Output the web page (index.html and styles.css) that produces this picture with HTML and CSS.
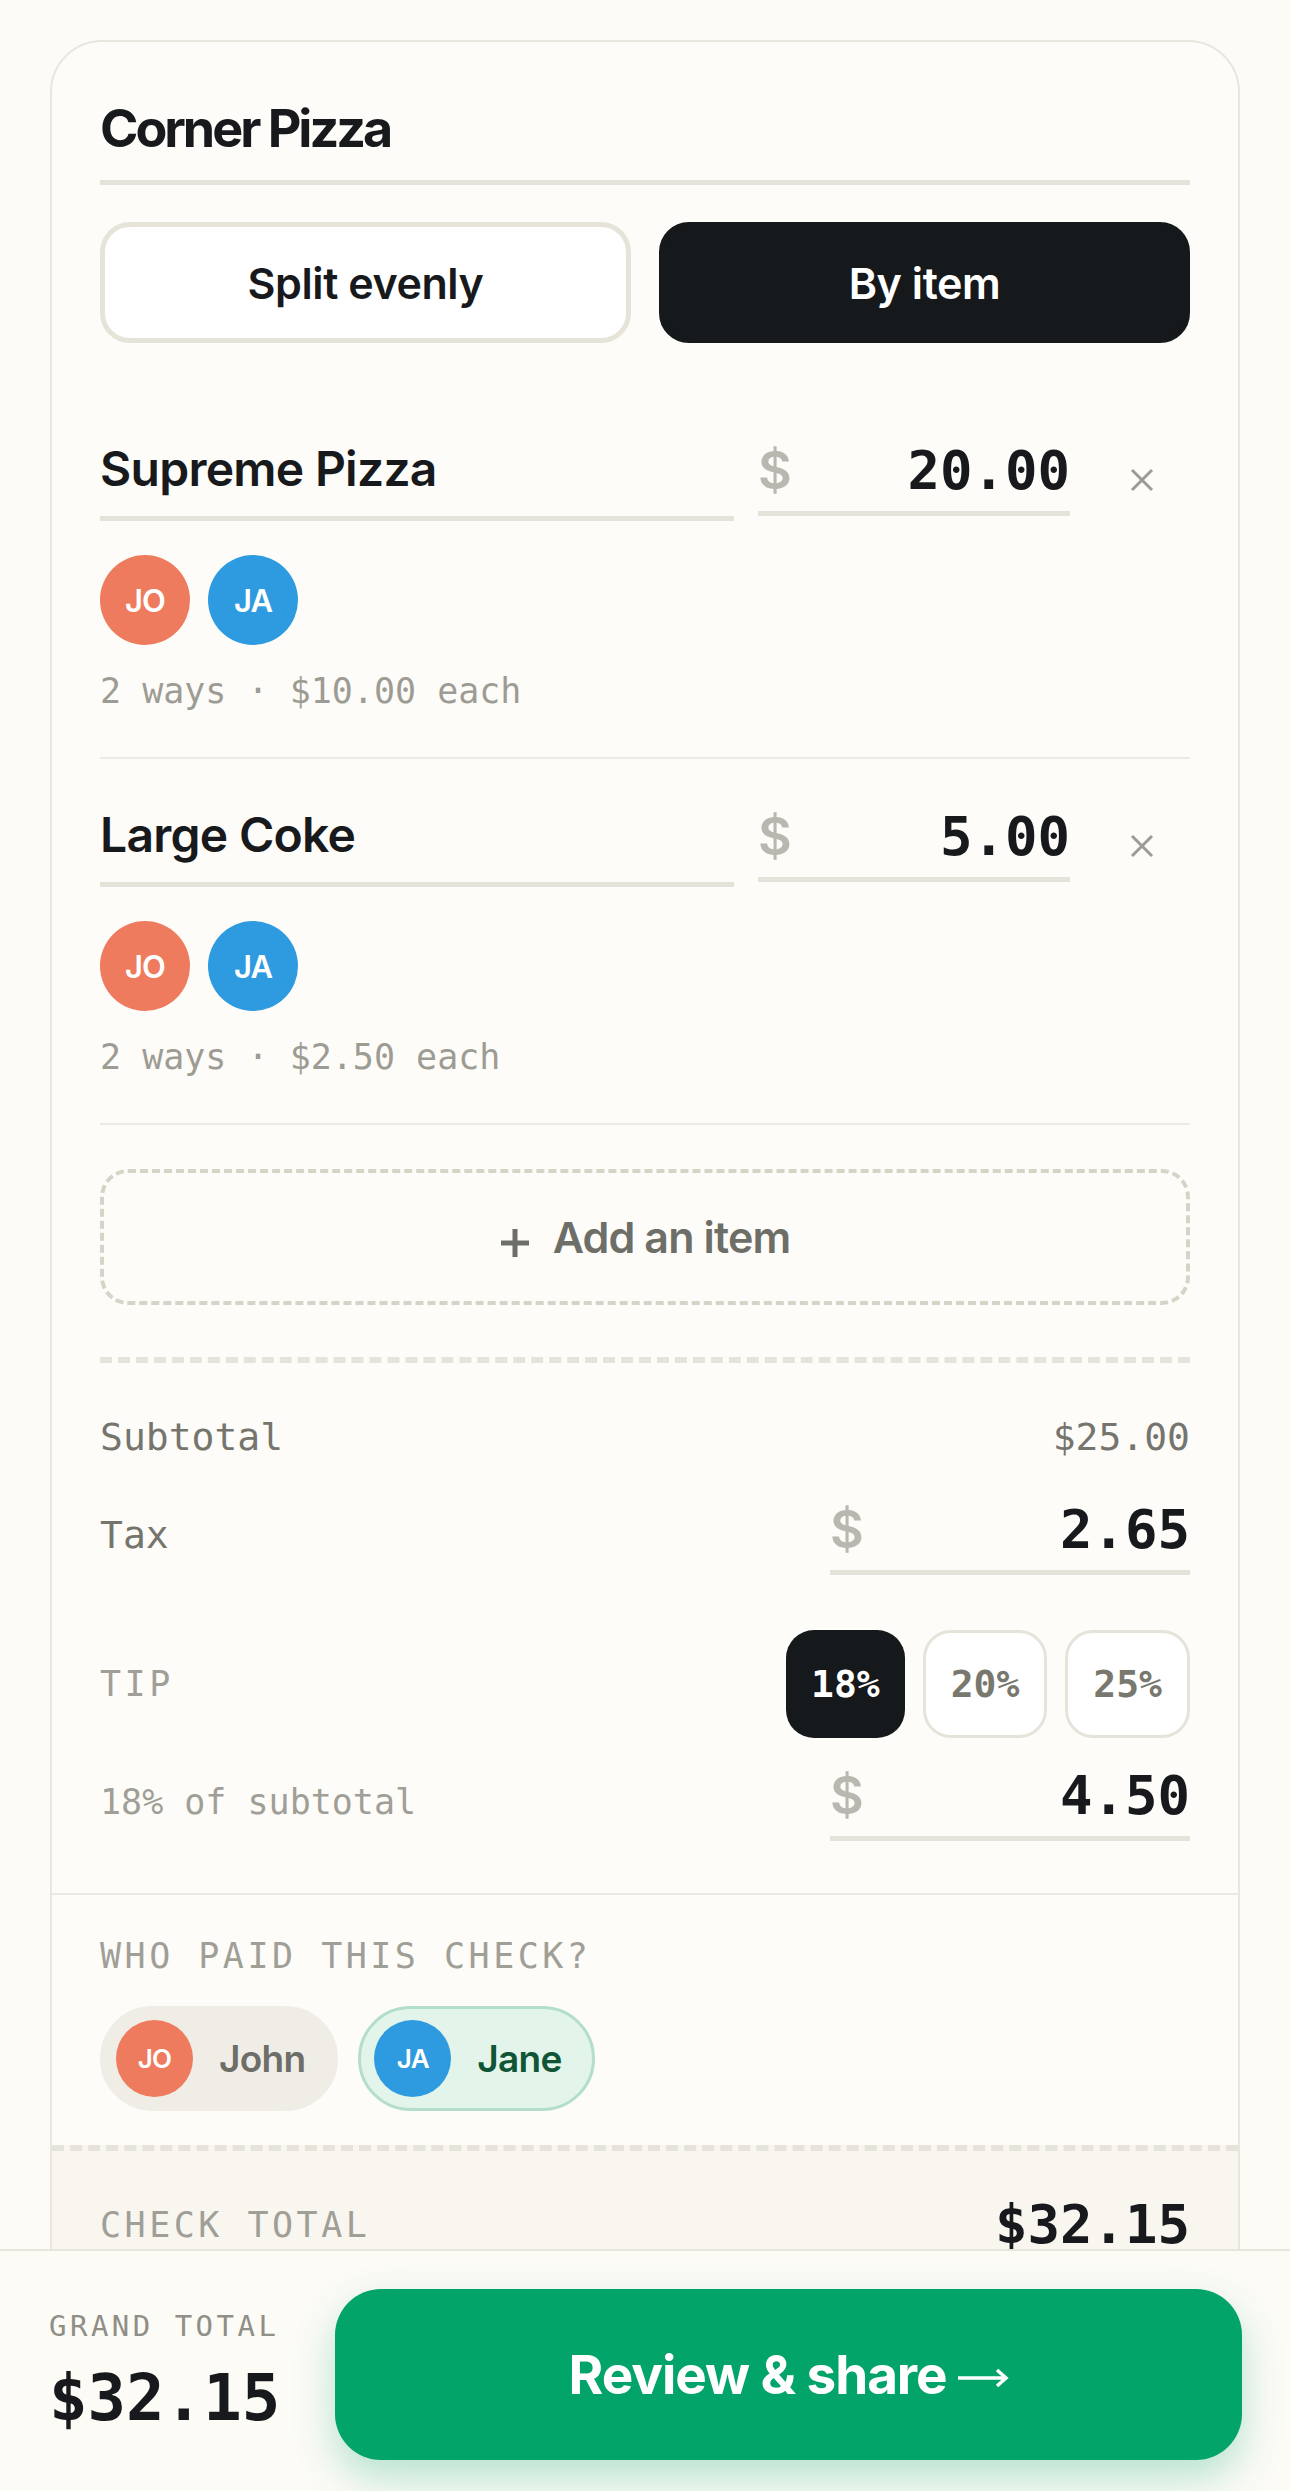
FILE: index.html
```html
<!DOCTYPE html>
<html lang="en">

<head>
    <meta charset="UTF-8">
    <meta name="viewport" content="width=device-width, initial-scale=1.0">
    <title>Corner Pizza</title>
    <link rel="stylesheet" href="styles.css">
</head>

<body>
    <div class="card">
        <div class="card-main">
            <h1 class="check-name">Corner Pizza</h1>

            <div class="split-toggle">
                <button class="toggle-btn">Split evenly</button>
                <button class="toggle-btn active">By item</button>
            </div>

            <!-- items -->
            <div class="item">
                <div class="item-row">
                    <div class="item-name">Supreme Pizza</div>
                    <div class="money-field">
                        <span class="dollar">$</span>
                        <span class="amount">20.00</span>
                    </div>
                    <button class="remove-btn">
                        <svg width="24" height="24" viewBox="0 0 24 24"><path d="M2 2L22 22M22 2L2 22" stroke="#9c9b94" stroke-width="3" /></svg>
                    </button>
                </div>
                <div class="avatars">
                    <span class="avatar jo">JO</span>
                    <span class="avatar ja">JA</span>
                </div>
                <p class="item-note">2 ways · $10.00 each</p>
            </div>

            <div class="item">
                <div class="item-row">
                    <div class="item-name">Large Coke</div>
                    <div class="money-field">
                        <span class="dollar">$</span>
                        <span class="amount">5.00</span>
                    </div>
                    <button class="remove-btn">
                        <svg width="24" height="24" viewBox="0 0 24 24"><path d="M2 2L22 22M22 2L2 22" stroke="#9c9b94" stroke-width="3" /></svg>
                    </button>
                </div>
                <div class="avatars">
                    <span class="avatar jo">JO</span>
                    <span class="avatar ja">JA</span>
                </div>
                <p class="item-note">2 ways · $2.50 each</p>
            </div>

            <button class="add-item">
                <svg class="plus" width="30" height="30" viewBox="0 0 30 30"><path d="M15 1V29M1 15H29" stroke="#6e6e68" stroke-width="5" /></svg>
                Add an item
            </button>

            <div class="dash-line"></div>

            <!-- totals -->
            <div class="sum-row subtotal">
                <span>Subtotal</span>
                <span>$25.00</span>
            </div>

            <div class="sum-row tax-row">
                <span class="sum-label">Tax</span>
                <div class="money-field wide">
                    <span class="dollar">$</span>
                    <span class="amount">2.65</span>
                </div>
            </div>

            <div class="sum-row tip-row">
                <span class="caps-label">TIP</span>
                <div class="tip-options">
                    <button class="tip-btn active">18%</button>
                    <button class="tip-btn">20%</button>
                    <button class="tip-btn">25%</button>
                </div>
            </div>

            <div class="sum-row tip-amount-row">
                <span class="sum-label light">18% of subtotal</span>
                <div class="money-field wide">
                    <span class="dollar">$</span>
                    <span class="amount">4.50</span>
                </div>
            </div>
        </div>

        <div class="payer">
            <p class="caps-label">WHO PAID THIS CHECK?</p>
            <div class="payer-chips">
                <button class="chip"><span class="avatar small jo">JO</span>John</button>
                <button class="chip selected"><span class="avatar small ja">JA</span>Jane</button>
            </div>
        </div>

        <div class="check-total">
            <span class="caps-label">CHECK TOTAL</span>
            <span class="total-amount">$32.15</span>
        </div>
    </div>

    <div class="bottom-bar">
        <div class="grand">
            <p class="caps-label">GRAND TOTAL</p>
            <p class="grand-amount">$32.15</p>
        </div>
        <button class="review-btn">
            Review &amp; share
            <svg class="arrow" width="52" height="20" viewBox="0 0 52 20"><path d="M1 10H49M40 2L49 10L40 18" fill="none" stroke="#fff" stroke-width="3.5" /></svg>
        </button>
    </div>
</body>

</html>
```

FILE: styles.css
```css
* {
    box-sizing: border-box;
}

body {
    margin: 0;
    padding: 40px 50px 0;
    background-color: #fcfbf6;
    font-family: Inter, "Noto Sans", sans-serif;
    color: #17191c;
}

button {
    font-family: inherit;
    cursor: pointer;
}

.card {
    background-color: #fdfcf8;
    border: 2px solid #e8e6de;
    border-radius: 52px;
    overflow: hidden;
}

.card-main {
    padding: 56px 48px 52px;
}

.check-name {
    margin: 0;
    padding-bottom: 20px;
    border-bottom: 5px solid #e4e2d9;
    font-size: 52px;
    font-weight: 700;
    line-height: 62px;
    letter-spacing: -0.058em;
}

/* split mode */
.split-toggle {
    display: flex;
    gap: 28px;
    margin: 37px 0 50px;
}

.toggle-btn {
    flex: 1;
    height: 121px;
    border: 5px solid #e6e4d9;
    border-radius: 30px;
    background-color: #fff;
    color: #17191c;
    font-size: 43px;
    font-weight: 600;
    letter-spacing: -0.01em;
}

.toggle-btn.active {
    background-color: #16191b;
    border-color: #16191b;
    color: #fff;
}

/* items */
.item {
    padding: 46px 0 45px;
    border-bottom: 2px solid #ecebe4;
}

.item-row {
    display: flex;
    align-items: flex-end;
    gap: 24px;
}

.item-name {
    flex: 1;
    padding-bottom: 18px;
    border-bottom: 5px solid #e4e2d9;
    font-size: 48px;
    font-weight: 600;
    line-height: 58px;
    letter-spacing: -0.015em;
}

.money-field {
    display: flex;
    align-items: baseline;
    justify-content: space-between;
    width: 312px;
    margin-bottom: 5px;
    padding-bottom: 8px;
    border-bottom: 5px solid #e4e2d9;
}

.money-field.wide {
    width: 360px;
    margin-bottom: 0;
}

.dollar {
    font-size: 52px;
    font-weight: 600;
    line-height: 64px;
    color: #b9b8b0;
}

.amount {
    font-family: "DejaVu Sans Mono", monospace;
    font-size: 54px;
    font-weight: 700;
    line-height: 64px;
}

.remove-btn {
    align-self: center;
    display: flex;
    justify-content: center;
    width: 96px;
    padding: 0;
    border: none;
    background: none;
}

.avatars {
    display: flex;
    gap: 18px;
    margin-top: 34px;
}

.avatar {
    display: flex;
    align-items: center;
    justify-content: center;
    flex-shrink: 0;
    width: 90px;
    height: 90px;
    border-radius: 50%;
    color: #fff;
    font-size: 31px;
    font-weight: 600;
    letter-spacing: -0.03em;
}

.avatar.jo {
    background-color: #ee7b5e;
}

.avatar.ja {
    background-color: #2e9be0;
}

.item-note {
    margin: 25px 0 0;
    font-family: "DejaVu Sans Mono", monospace;
    font-size: 35px;
    line-height: 42px;
    color: #9d9c94;
}

.add-item {
    display: flex;
    align-items: center;
    justify-content: center;
    gap: 23px;
    width: 100%;
    height: 136px;
    margin-top: 44px;
    border: 4px dashed #d6d4c7;
    border-radius: 28px;
    background: none;
    color: #6e6e68;
    font-size: 43px;
    font-weight: 600;
    letter-spacing: -0.02em;
}

.plus {
    margin-top: 12px;
}

.dash-line {
    margin-top: 52px;
    border-top: 6px dashed #e6e4da;
}

/* totals */
.sum-row {
    display: flex;
    justify-content: space-between;
    align-items: baseline;
}

.subtotal {
    margin-top: 51px;
    font-family: "DejaVu Sans Mono", monospace;
    font-size: 38px;
    line-height: 46px;
    color: #75756e;
}

.sum-label {
    font-family: "DejaVu Sans Mono", monospace;
    font-size: 38px;
    line-height: 46px;
    color: #75756e;
}

.sum-label.light {
    font-size: 35px;
    color: #a09f97;
}

.tax-row {
    margin-top: 38px;
}

.caps-label {
    font-family: "DejaVu Sans Mono", monospace;
    font-size: 35px;
    line-height: 42px;
    letter-spacing: 0.1em;
    color: #a09f97;
}

.tip-row {
    align-items: center;
    margin-top: 55px;
}

.tip-options {
    display: flex;
    gap: 18px;
}

.tip-btn {
    height: 108px;
    padding: 0 25px;
    border: 3px solid #e5e3da;
    border-radius: 28px;
    background-color: #fff;
    color: #78786f;
    font-family: "DejaVu Sans Mono", monospace;
    font-size: 38px;
    font-weight: 700;
}

.tip-btn.active {
    border: none;
    background-color: #16191b;
    color: #fff;
}

.tip-amount-row {
    margin-top: 26px;
}

/* payer */
.payer {
    padding: 40px 48px 34px;
    border-top: 2px solid #ebe9e1;
}

.payer .caps-label {
    margin: 0;
}

.payer-chips {
    display: flex;
    align-items: center;
    gap: 20px;
    margin-top: 29px;
}

.chip {
    display: flex;
    align-items: center;
    gap: 26px;
    height: 105px;
    padding: 0 30px 0 13px;
    border: 3px solid #efede6;
    border-radius: 53px;
    background-color: #efede6;
    color: #6e6e68;
    font-size: 37px;
    font-weight: 600;
    letter-spacing: -0.02em;
}

.chip.selected {
    border-color: #b3decb;
    background-color: #e3f4ea;
    color: #0f5536;
}

.avatar.small {
    width: 77px;
    height: 77px;
    font-size: 26px;
}

.check-total {
    display: flex;
    align-items: center;
    justify-content: space-between;
    padding: 42px 48px 140px;
    border-top: 6px dashed #e6e4da;
    background-color: #f8f6ef;
}

.total-amount {
    font-family: "DejaVu Sans Mono", monospace;
    font-size: 54px;
    font-weight: 700;
    line-height: 64px;
}

/* bottom bar */
.bottom-bar {
    position: fixed;
    left: 0;
    right: 0;
    bottom: 0;
    display: flex;
    align-items: flex-start;
    gap: 55px;
    height: 242px;
    padding: 38px 48px 0 49px;
    border-top: 2px solid #e7e5dd;
    background-color: #fcfbf6;
}

.grand {
    margin-top: 20px;
}

.grand .caps-label {
    margin: 0;
    font-size: 29px;
    line-height: 35px;
    letter-spacing: 0.12em;
    color: #8f8e87;
}

.grand-amount {
    margin: 23px 0 0;
    font-family: "DejaVu Sans Mono", monospace;
    font-size: 64px;
    font-weight: 700;
    line-height: 63px;
}

.review-btn {
    flex: 1;
    display: flex;
    align-items: center;
    justify-content: center;
    gap: 10px;
    height: 171px;
    border: none;
    border-radius: 46px;
    background-color: #02a469;
    color: #fff;
    font-size: 53px;
    font-weight: 700;
    letter-spacing: -0.02em;
    box-shadow: 0 18px 40px rgba(2, 164, 105, 0.28);
}

.arrow {
    margin-top: 6px;
}
```
